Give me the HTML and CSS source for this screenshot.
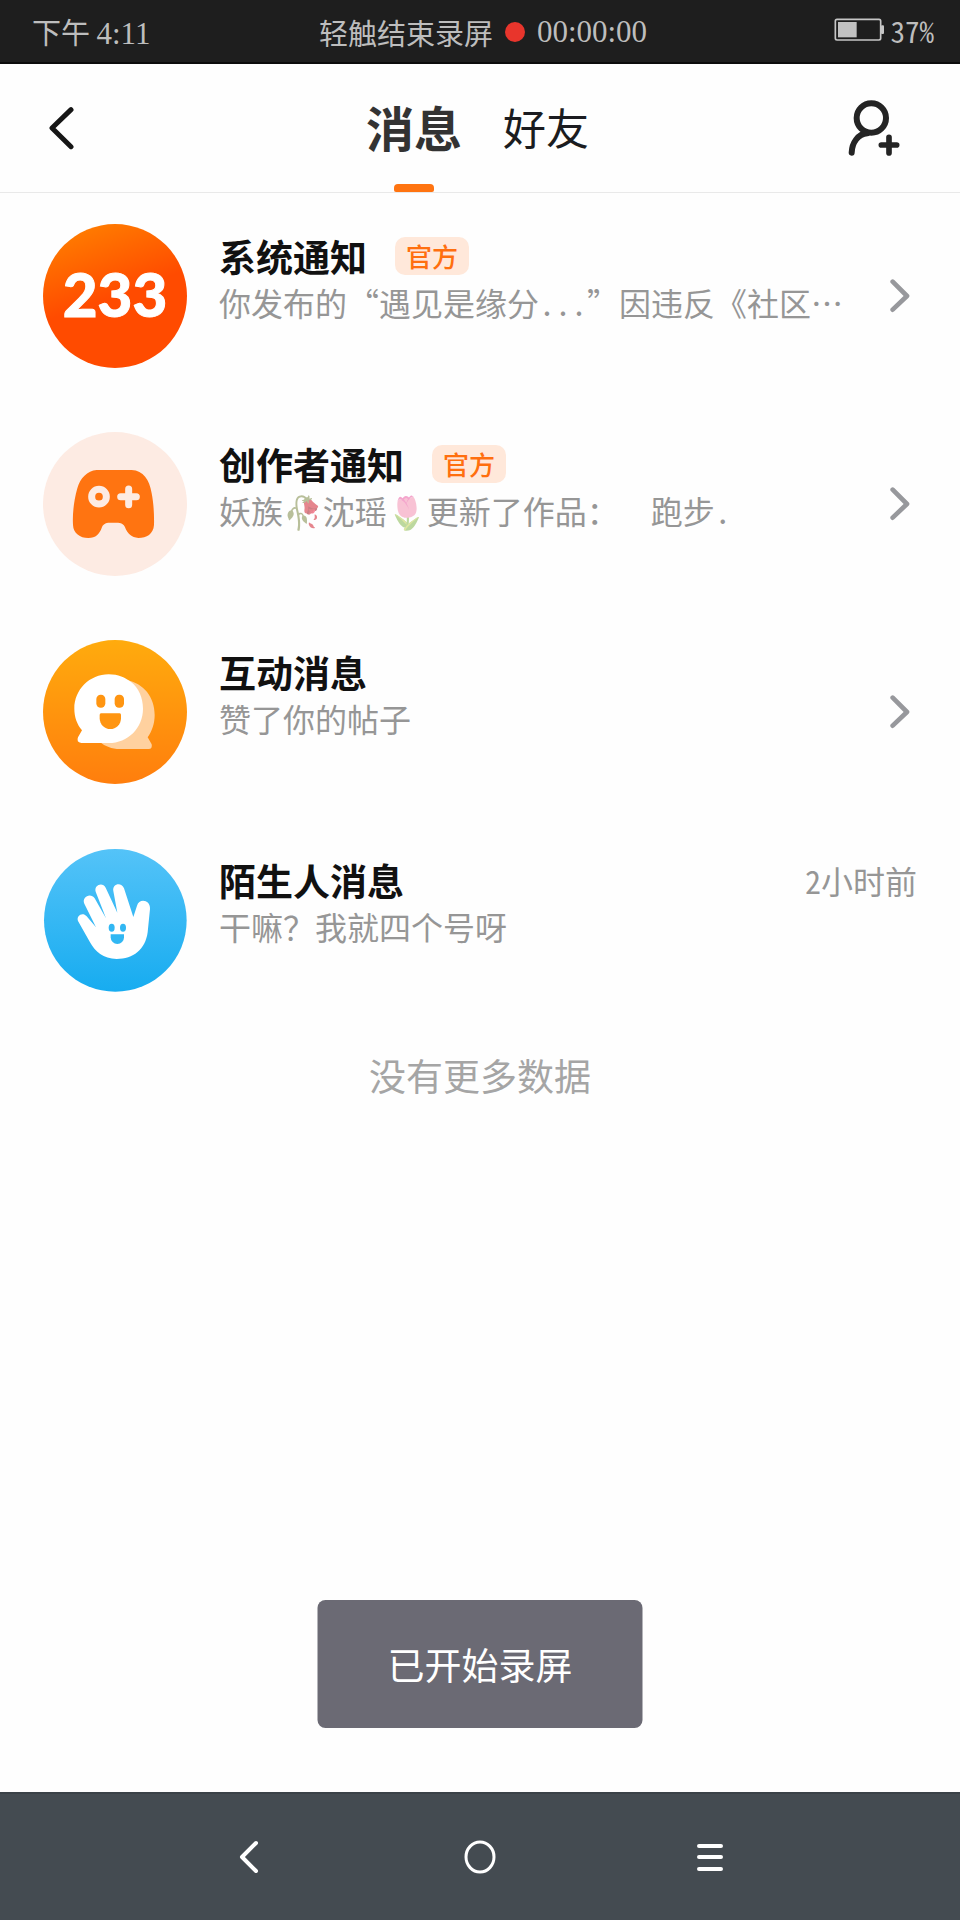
FILE: index.html
```html
<!DOCTYPE html>
<html lang="zh-CN">
<head>
<meta charset="utf-8">
<meta name="viewport" content="width=device-width, initial-scale=1">
<title>消息</title>
<link rel="stylesheet" href="styles.css">
</head>
<body>
<div class="statusbar">
  <div class="status-time">下午 <span class="clock">4:11</span></div>
  <div class="status-record">轻触结束录屏<span class="record-dot"></span><span class="clock">00:00:00</span></div>
  <div class="status-battery">
    <svg width="50" height="24" viewBox="0 0 150 72" aria-hidden="true"><rect x="4" y="4" width="136" height="62" rx="5" fill="none" stroke="#c6c6c6" stroke-width="5"/><rect x="12" y="12" width="56" height="46" fill="#c2c2c2"/><rect x="141" y="22" width="9" height="26" rx="3" fill="#c6c6c6"/></svg>
    <span>37%</span>
  </div>
</div>
<header class="header">
  <button class="icon-button" aria-label="返回">
    <svg width="26" height="44" viewBox="147 315 78 132" fill="none" stroke="#161616" stroke-width="15" stroke-linecap="round" stroke-linejoin="round" aria-hidden="true"><path d="M213 326 156 381 213 437"/></svg>
  </button>
  <nav class="tabs">
    <a class="tab tab-active" href="#messages">消息</a>
    <a class="tab" href="#friends">好友</a>
  </nav>
  <button class="icon-button" aria-label="添加好友">
    <svg width="52" height="56" viewBox="1106 300 156 168" fill="none" stroke="#242424" stroke-width="18" stroke-linecap="round" aria-hidden="true"><circle cx="1176" cy="354" r="44"/><path d="M1117 458C1118 428 1136 402 1164 400"/><path d="M1229 412V459M1206 435H1252" stroke-width="17"/></svg>
  </button>
</header>
<main class="content" id="messages">
  <ul class="list">
    <li><a class="row" href="#system">
      <span class="avatar avatar-brand">233</span>
      <span class="body">
        <span class="heading"><span class="title">系统通知</span><span class="badge">官方</span></span>
        <span class="preview">你发布的“遇见是缘分<span class="half">...</span>”因违反《社区…</span>
      </span>
      <svg class="chevron" width="20" height="34" viewBox="0 0 60 102" aria-hidden="true"><path d="M8 8 51 51 8 92"/></svg>
    </a></li>
    <li><a class="row" href="#creator">
      <svg class="avatar" viewBox="129 66 432 432" aria-hidden="true"><circle cx="345" cy="282" r="216" fill="#fdebe3"/><path fill="#ff7411" d="M290 180H395C430 182 448 208 455 250C460 275 463 310 462 345C460 372 440 384 415 384C395 383 382 370 375 352C372 342 362 338 350 338H330C315 338 308 344 305 354C298 372 288 384 265 384C240 384 220 370 219 345C217 310 222 270 232 235C240 205 262 182 290 180Z"/><g fill="none" stroke="#fdebe3" stroke-width="21" stroke-linecap="round"><circle cx="297" cy="260" r="22"/><path d="M386 237V284M362 260H409"/></g></svg>
      <span class="body">
        <span class="heading"><span class="title">创作者通知</span><span class="badge">官方</span></span>
        <span class="preview">妖族<span class="emoji">🥀</span>沈瑶<span class="emoji">🌷</span>更新了作品：　&ensp;跑步<span class="half">.</span></span>
      </span>
      <svg class="chevron" width="20" height="34" viewBox="0 0 60 102" aria-hidden="true"><path d="M8 8 51 51 8 92"/></svg>
    </a></li>
    <li><a class="row" href="#interactions">
      <svg class="avatar" viewBox="129 60 432 432" aria-hidden="true"><defs><linearGradient id="amber" x1="0" y1="0" x2="0" y2="1"><stop offset="0" stop-color="#ffab0d"/><stop offset="1" stop-color="#ff7e0d"/></linearGradient></defs><circle cx="345" cy="276" r="216" fill="url(#amber)"/><path fill="#ffd19f" d="M380 180C430 190 464 230 464 285C464 310 456 334 443 352L455 373Q458 387 446 387H360C335 387 315 379 300 366Z"/><path fill="#fff" d="M326 163C355 163 375 172 394 187C416 204 429 234 429 266C429 324 384 369 326 369H244Q228 367 234 352L246 331C231 313 223 291 223 266C223 209 269 163 326 163Z"/><g fill="#ff9511"><rect x="289" y="224" width="27" height="39" rx="13"/><rect x="344" y="224" width="28" height="39" rx="13"/><path d="M303 280H359Q363 280 363 285V295A32 32 0 0 1 299 295V285Q299 280 303 280Z"/></g></svg>
      <span class="body">
        <span class="heading"><span class="title">互动消息</span></span>
        <span class="preview">赞了你的帖子</span>
      </span>
      <svg class="chevron" width="20" height="34" viewBox="0 0 60 102" aria-hidden="true"><path d="M8 8 51 51 8 92"/></svg>
    </a></li>
    <li><a class="row" href="#strangers">
      <svg class="avatar" viewBox="129 55 432 432" aria-hidden="true"><defs><linearGradient id="sky" x1="0" y1="0" x2="0" y2="1"><stop offset="0" stop-color="#54c3f8"/><stop offset="1" stop-color="#17acf0"/></linearGradient></defs><circle cx="346" cy="272" r="214" fill="url(#sky)"/><path fill="#fff" d="M234 274C228 258 248 246 260 260L288 293L253 222C244 202 272 187 284 206L318 266L287 186C281 166 308 155 317 174L352 249L340 184C336 162 364 155 372 176L400 262L411 228C417 205 452 210 450 238L443 308C436 360 400 388 350 388C310 388 285 365 270 338Z"/><g fill="#31b7f3"><ellipse cx="335" cy="294" rx="9" ry="12"/><ellipse cx="369" cy="294" rx="9" ry="12"/><path d="M332 314H372V323A20 20 0 0 1 332 323Z"/></g></svg>
      <span class="body">
        <span class="heading"><span class="title">陌生人消息</span><time class="time half">2小时前</time></span>
        <span class="preview">干嘛？我就四个号呀</span>
      </span>
    </a></li>
  </ul>
  <p class="end">没有更多数据</p>
</main>
<div class="toast" role="status">已开始录屏</div>
<footer class="navbar">
  <button class="nav-button" aria-label="后退"><svg width="32" height="36" viewBox="0 0 32 36" aria-hidden="true"><path d="M22 4 8 18 22 32" fill="none" stroke="#fff" stroke-width="4" stroke-linecap="round" stroke-linejoin="round"/></svg></button>
  <button class="nav-button" aria-label="主屏幕"><svg width="32" height="36" viewBox="0 0 32 36" aria-hidden="true"><ellipse cx="16" cy="18" rx="14" ry="15" fill="none" stroke="#fff" stroke-width="3"/></svg></button>
  <button class="nav-button" aria-label="菜单"><svg width="32" height="36" viewBox="0 0 32 36" aria-hidden="true"><path d="M5 7H27M5 18H27M5 30H27" stroke="#fff" stroke-width="4" stroke-linecap="round"/></svg></button>
</footer>
</body>
</html>
```
FILE: styles.css
```css
* {
  box-sizing: border-box;
}

body {
  margin: 0;
  min-height: 100vh;
  display: flex;
  flex-direction: column;
  position: relative;
  background: #fefefe;
  color: #111;
  font-family: "Noto Sans CJK SC", "Noto Sans", sans-serif;
}

button {
  border: 0;
  padding: 0;
  background: none;
  cursor: pointer;
}

a {
  color: inherit;
  text-decoration: none;
}

svg {
  display: block;
}

.statusbar {
  display: grid;
  grid-template-columns: 1fr auto 1fr;
  align-items: center;
  height: 64px;
  padding: 2px 26px 0 32px;
  background: #1e1e1e;
  border-bottom: 2px solid #0c0c0c;
  color: #bdbdbd;
  font-size: 29px;
  line-height: 36px;
}

.clock {
  font-family: "Liberation Serif", serif;
  font-size: 31px;
}

.status-record {
  display: flex;
  align-items: center;
}

.record-dot {
  width: 20px;
  height: 20px;
  margin: 0 12px;
  border-radius: 50%;
  background: #e8352c;
}

.status-battery {
  display: flex;
  align-items: center;
  justify-content: flex-end;
  gap: 6px;
  padding-bottom: 4px;
  font-feature-settings: "hwid";
}

.header {
  display: flex;
  align-items: center;
  justify-content: space-between;
  height: 129px;
  padding: 0 60px 0 49px;
  border-bottom: 1px solid #e9e9e9;
}

.tabs {
  display: flex;
  align-items: center;
  align-self: stretch;
  gap: 41px;
  padding-left: 32px;
}

.tab {
  position: relative;
  display: flex;
  align-items: center;
  height: 100%;
  padding-bottom: 4px;
  font-size: 43px;
  color: #1b1c20;
}

.tab-active {
  font-size: 48px;
  font-weight: 700;
  color: #333;
}

.tab-active::after {
  content: "";
  position: absolute;
  left: 50%;
  bottom: 0;
  width: 40px;
  height: 8px;
  margin-left: -20px;
  border-radius: 4px 4px 2px 2px;
  background: #ff7411;
}

.content {
  flex: 1;
}

.list {
  display: flex;
  flex-direction: column;
  gap: 64px;
  margin: 0;
  padding: 31px 43px 0;
  list-style: none;
}

.row {
  display: flex;
  gap: 32px;
}

.avatar {
  flex: none;
  width: 144px;
  height: 144px;
}

.avatar-brand {
  display: flex;
  align-items: center;
  justify-content: center;
  padding-bottom: 4px;
  border-radius: 50%;
  background: linear-gradient(160deg, #ff8000 5%, #ff4b00 50%);
  color: #fff;
  font-family: Lato, sans-serif;
  font-size: 60px;
  font-weight: 900;
  -webkit-text-stroke: 1px #fff;
}

.body {
  flex: 1;
  min-width: 0;
  padding-top: 8px;
}

.heading {
  display: flex;
  align-items: center;
  height: 48px;
}

.title {
  font-size: 37px;
  font-weight: 700;
}

.badge {
  margin-left: 28px;
  padding: 0 11px;
  border-radius: 10px;
  background: #ffe8da;
  color: #ff6f0f;
  font-size: 26px;
  font-weight: 500;
  line-height: 38px;
}

.time {
  margin-left: auto;
  color: #969696;
  font-size: 32px;
  line-height: 44px;
}

.preview {
  display: block;
  overflow: hidden;
  color: #969696;
  font-size: 32px;
  line-height: 44px;
  white-space: nowrap;
  text-overflow: ellipsis;
}

.half {
  font-feature-settings: "hwid";
}

.emoji {
  font-family: "Noto Color Emoji", sans-serif;
  opacity: 0.5;
}

.chevron {
  flex: none;
  align-self: center;
  margin: 0 7px;
  fill: none;
  stroke: #97989c;
  stroke-width: 14;
  stroke-linecap: round;
  stroke-linejoin: round;
}

.end {
  margin: 56px 0 0;
  color: #a5a5a5;
  font-size: 37px;
  line-height: 54px;
  text-align: center;
}

.toast {
  position: absolute;
  left: 50%;
  bottom: 192px;
  transform: translateX(-50%);
  padding: 36px 70px;
  border-radius: 8px;
  background: #6b6a74;
  color: #fff;
  font-size: 37px;
  line-height: 56px;
  white-space: nowrap;
}

.navbar {
  display: flex;
  justify-content: center;
  gap: 198px;
  height: 128px;
  background: #444b51;
  border-top: 2px solid #3a4147;
}

.nav-button {
  display: flex;
  align-items: center;
}
```
